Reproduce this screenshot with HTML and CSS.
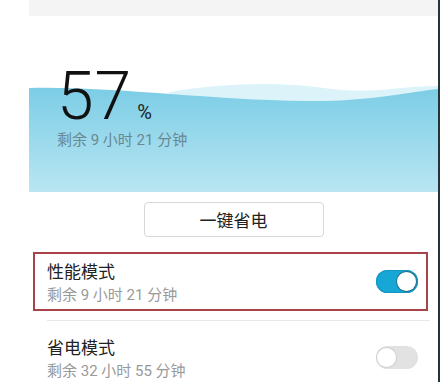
FILE: index.html
```html
<!DOCTYPE html>
<html lang="zh-CN">
<head>
<meta charset="utf-8">
<title>电池</title>
<link rel="stylesheet" href="styles.css">
</head>
<body>
<div class="screen">
  <div class="topbar"></div>
  <section class="hero">
    <svg class="wave" viewBox="0 0 409 176" preserveAspectRatio="none" aria-hidden="true">
      <defs>
        <linearGradient id="blue" x1="0" y1="0" x2="0" y2="1">
          <stop offset="0" stop-color="#7ccde6"/>
          <stop offset="1" stop-color="#b9e6f2"/>
        </linearGradient>
      </defs>
      <path d="M140 76 C190 68 245 65 295 72 C340 79 370 70 409 70 L409 176 L140 176 Z" fill="#dcf3f9"/>
      <path d="M0 72 C80 70 180 84 275 85 C340 86 380 76 409 73 L409 176 L0 176 Z" fill="url(#blue)"/>
    </svg>
    <div class="level">
      <span class="num">57</span><span class="pct">%</span>
    </div>
    <div class="remain">剩余 9 小时 21 分钟</div>
  </section>
  <div class="actions">
    <button class="save-btn">一键省电</button>
  </div>
  <div class="row highlighted">
    <div class="row-text">
      <div class="row-title">性能模式</div>
      <div class="row-sub">剩余 9 小时 21 分钟</div>
    </div>
    <span class="toggle on"><span class="knob"></span></span>
  </div>
  <div class="divider"></div>
  <div class="row plain">
    <div class="row-text">
      <div class="row-title">省电模式</div>
      <div class="row-sub">剩余 32 小时 55 分钟</div>
    </div>
    <span class="toggle off"><span class="knob"></span></span>
  </div>
</div>
</body>
</html>
```

FILE: styles.css
```css
* { box-sizing: border-box; }
html, body { margin: 0; padding: 0; background: #fff; }
body {
  width: 445px;
  height: 382px;
  overflow: hidden;
  font-family: Roboto, "Noto Sans CJK SC", sans-serif;
}
.screen {
  margin-left: 29px;
  width: 411px;
  height: 382px;
  border-right: 2px solid #23343b;
  background: #fff;
}
.topbar {
  height: 16px;
  background: #f4f4f4;
}
.hero {
  position: relative;
  height: 176px;
  padding: 53px 0 0 28px;
}
.wave {
  position: absolute;
  left: 0;
  top: 0;
  width: 100%;
  height: 100%;
  display: block;
}
.level, .remain { position: relative; }
.level {
  display: flex;
  align-items: baseline;
  height: 56px;
}
.num {
  font-size: 66px;
  font-weight: 300;
  line-height: 56px;
  color: #111;
  letter-spacing: 1px;
}
.pct {
  font-size: 20px;
  color: #222;
  margin-left: 5px;
}
.remain {
  margin-top: 5px;
  font-size: 15px;
  line-height: 20px;
  color: #6a8892;
}
.actions {
  display: flex;
  justify-content: center;
  padding-top: 10px;
}
.save-btn {
  width: 180px;
  height: 35px;
  border: 1px solid #d8d8d8;
  border-radius: 4px;
  background: #fff;
  font-family: "Noto Sans CJK SC", sans-serif;
  font-size: 17px;
  color: #222;
  padding: 0;
}
.row {
  display: flex;
  align-items: center;
  justify-content: space-between;
}
.highlighted {
  margin: 15px 10px 0 4px;
  height: 59px;
  border: 2px solid #a8434a;
  padding: 0 8px 0 12px;
}
.plain {
  align-items: flex-start;
  height: 60px;
  padding: 14px 20px 0 18px;
}
.plain .toggle { margin-top: 11px; }
.row-title {
  font-size: 17px;
  line-height: 26px;
  color: #222;
}
.row-sub {
  font-size: 15px;
  line-height: 20px;
  color: #999;
}
.divider {
  height: 1px;
  background: #e8e8e8;
  margin: 9px 8px 0 18px;
}
.toggle {
  position: relative;
  width: 42px;
  height: 23px;
  border-radius: 12px;
  flex-shrink: 0;
}
.toggle .knob {
  position: absolute;
  top: 2px;
  width: 19px;
  height: 19px;
  border-radius: 50%;
  background: #fff;
}
.toggle.on { background: #16a7d7; box-shadow: inset 0 0 0 1px #1496c2; }
.toggle.on .knob { right: 2px; box-shadow: 0 0 0 1px #2a6f86; }
.toggle.off { background: #e2e2e2; }
.toggle.off .knob { left: 1px; box-shadow: 0 0 0 1px #d0d0d0; }
```
